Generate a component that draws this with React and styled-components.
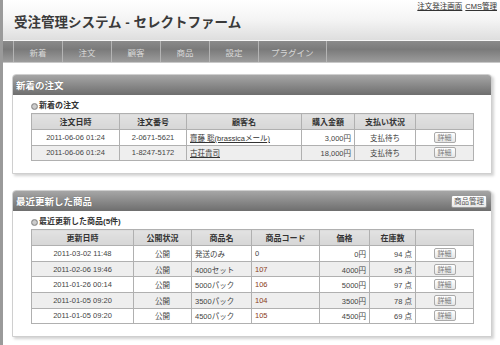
import styled, { createGlobalStyle } from 'styled-components'

const GlobalStyle = createGlobalStyle`
  html, body {
    margin: 0;
    padding: 0;
    background: #fff;
  }
  body {
    font-family: "Liberation Sans", "Noto Sans CJK JP", sans-serif;
    color: #333;
  }
`

const Page = styled.div`
  width: 500px;
  height: 345px;
  box-sizing: border-box;
  border-left: 3px solid #9a9a9a;
  overflow: hidden;
  background: #fff;
`

const Header = styled.div`
  height: 41px;
  box-sizing: border-box;
  background: linear-gradient(#ffffff 0%, #f4f4f4 50%, #dedede 100%);
  border-bottom: 1px solid #f6f6f6;
  display: flex;
  flex-direction: column;
  padding: 2px 3px 0 11px;
`

const TopLinks = styled.div`
  display: flex;
  justify-content: flex-end;
  gap: 3px;
  font-size: 7.5px;
  line-height: 10px;
`

const TopLink = styled.a`
  color: #333;
  text-decoration: underline;
`

const Title = styled.h1`
  margin: 2px 0 0;
  font-size: 13.5px;
  font-weight: bold;
  color: #3a3a3a;
  line-height: 18px;
`

const Nav = styled.ul`
  display: flex;
  margin: 0;
  padding: 0 0 0 10px;
  list-style: none;
  height: 21px;
  background: linear-gradient(#8a8a8a 0%, #7a7a7a 40%, #9c9c9c 100%);
  border-bottom: 1px solid #c8c8c8;
`

const NavItem = styled.li`
  min-width: 49px;
  box-sizing: border-box;
  padding: 0 12px;
  display: flex;
  align-items: center;
  justify-content: center;
  font-size: 8.5px;
  color: #d8d8d8;
  border-left: 1px solid #b4b4b4;
  ${({ $last }) => $last && 'border-right: 1px solid #b4b4b4;'}
`

const Content = styled.div`
  padding: 11px 8px 0 9px;
  display: flex;
  flex-direction: column;
  gap: 16px;
`

const Panel = styled.section`
  border: 1px solid #cfcfcf;
  border-radius: 4px 4px 0 0;
  box-shadow: 2px 2px 3px rgba(0, 0, 0, 0.18);
  background: #fff;
`

const PanelHeader = styled.div`
  height: 20px;
  background: linear-gradient(#a6a6a6 0%, #8a8a8a 50%, #6e6e6e 100%);
  border-radius: 3px 3px 0 0;
  display: flex;
  align-items: center;
  justify-content: space-between;
  padding: 0 4px 0 3px;
`

const PanelTitle = styled.h2`
  margin: 0;
  font-size: 9.5px;
  font-weight: bold;
  color: #fff;
  text-shadow: 0 0 1px rgba(0, 0, 0, 0.4);
`

const HeaderButton = styled.span`
  font-size: 7.5px;
  line-height: 11px;
  padding: 0 2px;
  color: #555;
  background: linear-gradient(#ffffff, #e8e8e8);
  border: 1px solid #999;
  border-radius: 2px;
`

const PanelBody = styled.div`
  padding: 6px 17px 12px 18px;
`

const SubTitle = styled.h3`
  margin: 0 0 2px;
  display: flex;
  align-items: center;
  gap: 1px;
  font-size: 8px;
  font-weight: bold;
  line-height: 10px;
  color: #333;
`

const Bullet = styled.span`
  width: 5px;
  height: 5px;
  border-radius: 50%;
  border: 1.5px solid #888;
  background: radial-gradient(circle, #ccc 40%, #999 100%);
`

const Table = styled.table`
  width: 442px;
  table-layout: fixed;
  border-collapse: collapse;
  font-size: 7.5px;
  color: #444;
  border: 1px solid #b0b0b0;
`

const Th = styled.th`
  height: 15px;
  padding: 0;
  font-weight: bold;
  font-size: 8px;
  color: #333;
  background: linear-gradient(#e2e2e2, #d6d6d6);
  border: 1px solid #b0b0b0;
`

const Row = styled.tr`
  background: ${({ $alt }) => ($alt ? '#eeeeee' : '#ffffff')};
`

const Td = styled.td`
  height: 14.6px;
  padding: 0 3px;
  text-align: ${({ $align }) => $align || 'center'};
  border: 1px solid #b0b0b0;
  white-space: nowrap;
  overflow: hidden;
  color: ${({ $code }) => ($code ? '#8a3b22' : '#444')};
`

const NameLink = styled.a`
  color: #333;
  text-decoration: underline;
`

const DetailButton = styled.span`
  display: inline-block;
  width: 20px;
  line-height: 9px;
  font-size: 7px;
  color: #777;
  text-align: center;
  background: linear-gradient(#ffffff, #e6e6e6);
  border: 1px solid #aaa;
  border-radius: 2px;
`

const orders = [
  { date: '2011-06-06 01:24', no: '2-0671-5621', name: '齋藤 聡(brassicaメール)', amount: '3,000', status: '支払待ち' },
  { date: '2011-06-06 01:24', no: '1-8247-5172', name: '古荘貴司', amount: '18,000', status: '支払待ち' },
]

const products = [
  { date: '2011-03-02 11:48', name: '発送のみ', code: '0', price: '0', stock: '94' },
  { date: '2011-02-06 19:46', name: '4000セット', code: '107', price: '4000', stock: '95' },
  { date: '2011-01-26 00:14', name: '5000パック', code: '106', price: '5000', stock: '97' },
  { date: '2011-01-05 09:20', name: '3500パック', code: '104', price: '3500', stock: '78' },
  { date: '2011-01-05 09:20', name: '4500パック', code: '105', price: '4500', stock: '69' },
]

const navItems = ['新着', '注文', '顧客', '商品', '設定', 'プラグイン']

function App() {
  return (
    <Page>
      <GlobalStyle />
      <Header>
        <TopLinks>
          <TopLink href="#">注文発注画面</TopLink>
          <TopLink href="#">CMS管理</TopLink>
        </TopLinks>
        <Title>受注管理システム - セレクトファーム</Title>
      </Header>
      <Nav>
        {navItems.map((item, i) => (
          <NavItem key={item} $last={i === navItems.length - 1}>
            {item}
          </NavItem>
        ))}
      </Nav>
      <Content>
        <Panel>
          <PanelHeader>
            <PanelTitle>新着の注文</PanelTitle>
          </PanelHeader>
          <PanelBody>
            <SubTitle>
              <Bullet />
              新着の注文
            </SubTitle>
            <Table>
              <colgroup>
                <col style={{ width: 88 }} />
                <col style={{ width: 67 }} />
                <col style={{ width: 115 }} />
                <col style={{ width: 53 }} />
                <col style={{ width: 61 }} />
                <col style={{ width: 58 }} />
              </colgroup>
              <thead>
                <tr>
                  <Th>注文日時</Th>
                  <Th>注文番号</Th>
                  <Th>顧客名</Th>
                  <Th>購入金額</Th>
                  <Th>支払い状況</Th>
                  <Th></Th>
                </tr>
              </thead>
              <tbody>
                {orders.map((o, i) => (
                  <Row key={o.no} $alt={i % 2 === 1}>
                    <Td>{o.date}</Td>
                    <Td>{o.no}</Td>
                    <Td $align="left">
                      <NameLink href="#">{o.name}</NameLink>
                    </Td>
                    <Td $align="right">{o.amount}円</Td>
                    <Td>{o.status}</Td>
                    <Td>
                      <DetailButton>詳細</DetailButton>
                    </Td>
                  </Row>
                ))}
              </tbody>
            </Table>
          </PanelBody>
        </Panel>

        <Panel>
          <PanelHeader>
            <PanelTitle>最近更新した商品</PanelTitle>
            <HeaderButton>商品管理</HeaderButton>
          </PanelHeader>
          <PanelBody>
            <SubTitle>
              <Bullet />
              最近更新した商品(5件)
            </SubTitle>
            <Table>
              <colgroup>
                <col style={{ width: 102 }} />
                <col style={{ width: 58 }} />
                <col style={{ width: 60 }} />
                <col style={{ width: 68 }} />
                <col style={{ width: 50 }} />
                <col style={{ width: 46 }} />
                <col style={{ width: 58 }} />
              </colgroup>
              <thead>
                <tr>
                  <Th>更新日時</Th>
                  <Th>公開状況</Th>
                  <Th>商品名</Th>
                  <Th>商品コード</Th>
                  <Th>価格</Th>
                  <Th>在庫数</Th>
                  <Th></Th>
                </tr>
              </thead>
              <tbody>
                {products.map((p, i) => (
                  <Row key={p.date + p.code} $alt={i % 2 === 1}>
                    <Td>{p.date}</Td>
                    <Td>公開</Td>
                    <Td $align="left">{p.name}</Td>
                    <Td $align="left" $code={p.code !== '0'}>{p.code}</Td>
                    <Td $align="right">{p.price}円</Td>
                    <Td $align="right">{p.stock} 点</Td>
                    <Td>
                      <DetailButton>詳細</DetailButton>
                    </Td>
                  </Row>
                ))}
              </tbody>
            </Table>
          </PanelBody>
        </Panel>
      </Content>
    </Page>
  )
}

export default App
